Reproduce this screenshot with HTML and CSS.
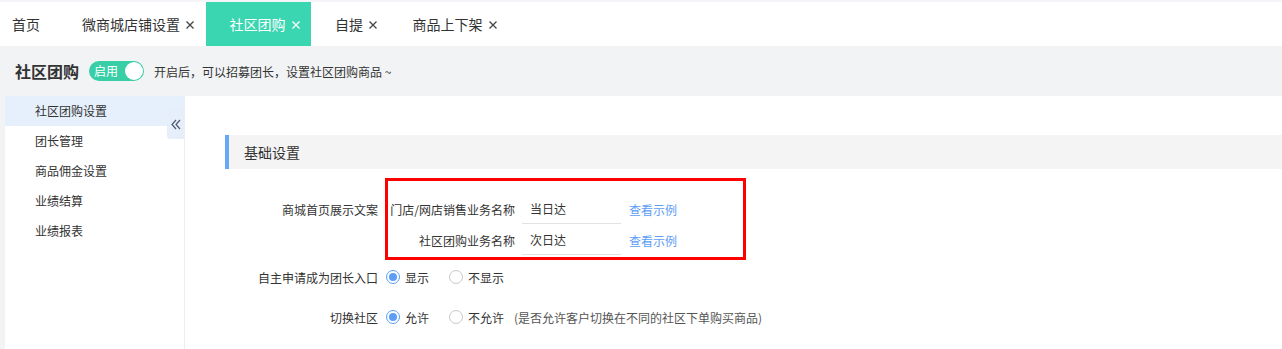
FILE: index.html
```html
<!DOCTYPE html>
<html lang="zh-CN">
<head>
<meta charset="utf-8">
<title>社区团购</title>
<link rel="stylesheet" href="styles.css">
</head>
<body>
<div class="tabbar">
  <div class="tab home">首页</div>
  <div class="tab">微商城店铺设置<svg class="x" width="8" height="8" viewBox="0 0 8 8"><path d="M0.5 0.5 L7.5 7.5 M7.5 0.5 L0.5 7.5"/></svg></div>
  <div class="tab active">社区团购<svg class="x" width="8" height="8" viewBox="0 0 8 8"><path d="M0.5 0.5 L7.5 7.5 M7.5 0.5 L0.5 7.5"/></svg></div>
  <div class="tab">自提<svg class="x" width="8" height="8" viewBox="0 0 8 8"><path d="M0.5 0.5 L7.5 7.5 M7.5 0.5 L0.5 7.5"/></svg></div>
  <div class="tab">商品上下架<svg class="x" width="8" height="8" viewBox="0 0 8 8"><path d="M0.5 0.5 L7.5 7.5 M7.5 0.5 L0.5 7.5"/></svg></div>
</div>
<div class="page">
  <div class="header">
    <span class="title">社区团购</span>
    <span class="toggle"><span class="toggle-text">启用</span><span class="knob"></span></span>
    <span class="desc">开启后，可以招募团长，设置社区团购商品 ~</span>
  </div>
  <div class="body">
    <div class="sidebar">
      <div class="menu-item active">社区团购设置</div>
      <div class="menu-item">团长管理</div>
      <div class="menu-item">商品佣金设置</div>
      <div class="menu-item">业绩结算</div>
      <div class="menu-item">业绩报表</div>
      <div class="collapse">
        <svg width="10" height="11" viewBox="0 0 10 11"><path d="M5 1 L1 5.5 L5 10 M9 1 L5 5.5 L9 10" fill="none" stroke="#4d5a70" stroke-width="1.2"/></svg>
      </div>
    </div>
    <div class="main">
      <div class="section-title">基础设置</div>
      <div class="form-row first">
        <div class="label top">商城首页展示文案</div>
        <div class="redbox">
          <div class="inner-row">
            <div class="inner-label">门店/网店销售业务名称</div>
            <div class="input">当日达</div>
            <a class="link">查看示例</a>
          </div>
          <div class="inner-row">
            <div class="inner-label">社区团购业务名称</div>
            <div class="input">次日达</div>
            <a class="link">查看示例</a>
          </div>
        </div>
      </div>
      <div class="form-row">
        <div class="label">自主申请成为团长入口</div>
        <label class="radio"><span class="dot checked"></span>显示</label>
        <label class="radio"><span class="dot"></span>不显示</label>
      </div>
      <div class="form-row second">
        <div class="label">切换社区</div>
        <label class="radio"><span class="dot checked"></span>允许</label>
        <label class="radio"><span class="dot"></span>不允许</label>
        <span class="note">(是否允许客户切换在不同的社区下单购买商品)</span>
      </div>
    </div>
  </div>
</div>
</body>
</html>
```
FILE: styles.css
```css
* { box-sizing: border-box; }
html, body { margin: 0; padding: 0; }
body {
  font-family: "Noto Sans CJK SC", "Liberation Sans", sans-serif;
  font-size: 12px;
  color: #333;
  background: #fff;
  width: 1282px;
  height: 349px;
  overflow: hidden;
}
.tabbar {
  display: flex;
  height: 46px;
  border-top: 2px solid #f4f5f9;
  background: #fff;
}
.tab {
  display: flex;
  align-items: center;
  padding: 0 11.5px 0 24px;
  font-size: 14px;
  color: #333;
  white-space: nowrap;
}
.tab.home { padding: 0 18px 0 12px; }
.tab .x {
  display: block;
  margin-left: 6px;
  margin-top: 1px;
  fill: none;
  stroke: #444;
  stroke-width: 1.3;
}
.tab.active { background: #3ad5b1; color: #fff; }
.tab.active .x { stroke: #fff; }

.page { background: #f2f3f5; }
.header {
  height: 50px;
  display: flex;
  align-items: center;
  padding-left: 15px;
}
.title { font-size: 16px; font-weight: bold; color: #333; }
.toggle {
  margin-left: 10px;
  width: 55px;
  height: 20px;
  border-radius: 10px;
  background: #38cfa7;
  display: flex;
  align-items: center;
  justify-content: space-between;
  padding: 0 1px 0 5px;
}
.toggle-text { color: #fff; font-size: 12px; line-height: 20px; }
.knob {
  width: 18px;
  height: 18px;
  border-radius: 50%;
  background: #fff;
}
.desc { margin-left: 10px; font-size: 12px; color: #333; }

.body {
  display: flex;
  padding-left: 5px;
  height: 253px;
}
.sidebar {
  width: 179px;
  background: #fff;
  position: relative;
}
.menu-item {
  height: 30px;
  line-height: 30px;
  padding-left: 30px;
  font-size: 12px;
  color: #333;
}
.menu-item.active { background: #e6f0fc; }
.collapse {
  position: absolute;
  top: 13px;
  right: 0;
  width: 17px;
  height: 30px;
  background: #e6eefa;
  border-radius: 3px 0 0 3px;
  display: flex;
  align-items: center;
  justify-content: center;
}
.collapse svg { display: block; }

.main {
  flex: 1;
  background: #fff;
  border-left: 1px solid #eceef1;
  padding: 39px 0 0 40px;
}
.section-title {
  height: 34px;
  line-height: 34px;
  background: #f4f4f4;
  border-left: 4px solid #67a7f7;
  padding-left: 15px;
  font-size: 14px;
  color: #333;
}
.form-row {
  display: flex;
  align-items: center;
  height: 34px;
}
.form-row.first {
  align-items: flex-start;
  height: auto;
  margin-top: 9px;
}
.form-row.second { margin-top: 6px; }
.label {
  width: 160px;
  padding-right: 7px;
  text-align: right;
  color: #333;
  white-space: nowrap;
}
.label.top { margin-top: 16px; line-height: 31px; }
.redbox {
  width: 361px;
  border: 3px solid #f00;
  padding: 13px 0 1px 0;
}
.inner-row {
  display: flex;
  align-items: center;
  height: 31px;
}
.inner-label {
  width: 127px;
  text-align: right;
  white-space: nowrap;
  color: #333;
}
.input {
  margin-left: 7px;
  width: 99px;
  height: 30px;
  line-height: 29px;
  padding-left: 8px;
  border-bottom: 1px solid #e2e2e2;
  color: #333;
  align-self: flex-start;
}
.link { margin-left: 8px; color: #5c9df6; }
.radio {
  display: flex;
  align-items: center;
  margin-left: 1px;
  margin-right: 20px;
  color: #333;
}
.radio + .radio { margin-left: 0; }
.dot {
  width: 14px;
  height: 14px;
  border-radius: 50%;
  border: 1px solid #c8c8c8;
  margin-right: 5px;
  background: #fff;
  position: relative;
}
.dot.checked { border-color: #5c9df6; }
.dot.checked::after {
  content: "";
  position: absolute;
  left: 2px;
  top: 2px;
  width: 8px;
  height: 8px;
  border-radius: 50%;
  background: #5c9df6;
}
.note { margin-left: -10px; color: #555; }
```
